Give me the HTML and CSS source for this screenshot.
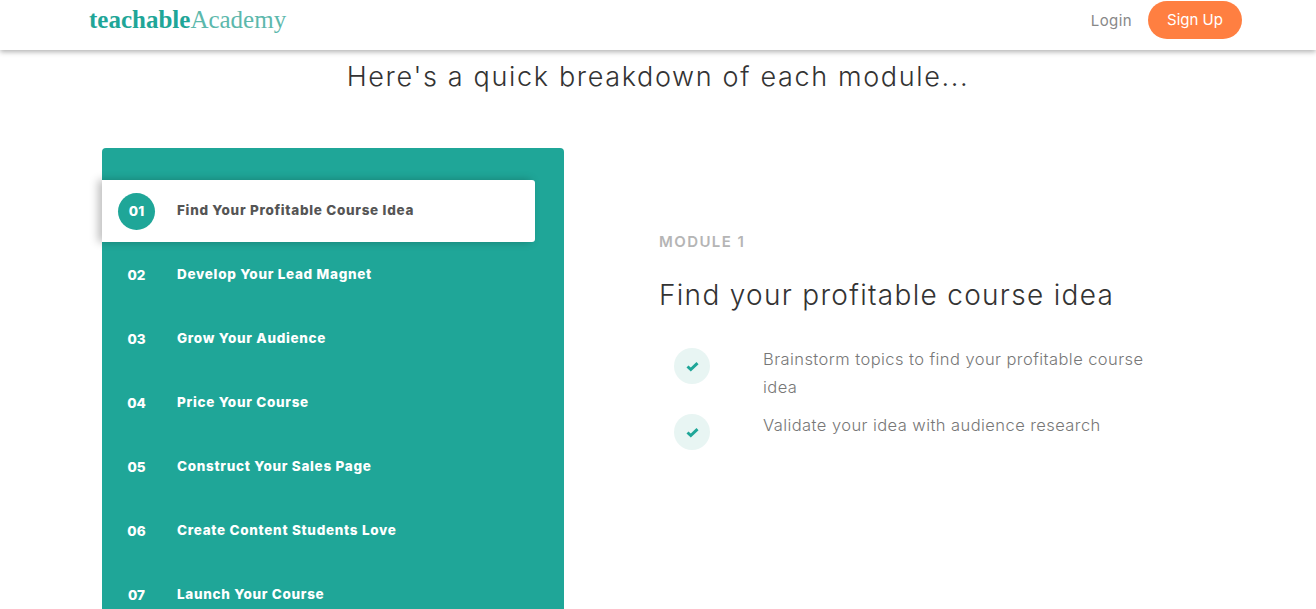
FILE: index.html
```html
<!DOCTYPE html>
<html lang="en">
<head>
    <meta charset="UTF-8">
    <title>Teachable Academy</title>
    <link rel="stylesheet" href="styles.css">
</head>
<body>
    <header class="topbar">
        <a class="logo"><span class="logo-bold">teachable</span><span class="logo-light">Academy</span></a>
        <nav class="topnav">
            <a class="login">Login</a>
            <a class="signup">Sign Up</a>
        </nav>
    </header>

    <main>
        <h2 class="page-title">Here's a quick breakdown of each module...</h2>

        <section class="modules">
            <ul class="module-list">
                <li class="module active"><span class="num">01</span><span class="name">Find Your Profitable Course Idea</span></li>
                <li class="module"><span class="num">02</span><span class="name">Develop Your Lead Magnet</span></li>
                <li class="module"><span class="num">03</span><span class="name">Grow Your Audience</span></li>
                <li class="module"><span class="num">04</span><span class="name">Price Your Course</span></li>
                <li class="module"><span class="num">05</span><span class="name">Construct Your Sales Page</span></li>
                <li class="module"><span class="num">06</span><span class="name">Create Content Students Love</span></li>
                <li class="module"><span class="num">07</span><span class="name">Launch Your Course</span></li>
            </ul>

            <div class="detail">
                <div class="eyebrow">MODULE 1</div>
                <h3 class="detail-title">Find your profitable course idea</h3>
                <ul class="points">
                    <li class="point">
                        <span class="check"><svg width="13" height="11" viewBox="0 0 13 11"><path d="M1.5 5.5 4.8 8.5 11.5 2.2" fill="none" stroke="#1fa698" stroke-width="3"/></svg></span>
                        <span class="point-text">Brainstorm topics to find your profitable course idea</span>
                    </li>
                    <li class="point">
                        <span class="check"><svg width="13" height="11" viewBox="0 0 13 11"><path d="M1.5 5.5 4.8 8.5 11.5 2.2" fill="none" stroke="#1fa698" stroke-width="3"/></svg></span>
                        <span class="point-text">Validate your idea with audience research</span>
                    </li>
                </ul>
            </div>
        </section>
    </main>
</body>
</html>
```
FILE: styles.css
```css
html, body {
    margin: 0;
    height: 609px;
    overflow: hidden;
}
body {
    font-family: "Inter", "Liberation Sans", sans-serif;
    background-color: #fff;
    color: #333;
}
ul {
    list-style-type: none;
    margin: 0;
    padding: 0;
}
.topbar {
    height: 50px;
    display: flex;
    align-items: center;
    justify-content: space-between;
    padding: 0 74px 0 89px;
    background-color: #fff;
    box-shadow: 0 2px 5px rgba(0, 0, 0, 0.3);
}
.logo {
    font-family: "Liberation Serif", serif;
    font-size: 25px;
    margin-top: -10px;
    color: #1fa698;
}
.logo-bold {
    font-weight: bold;
}
.logo-light {
    color: #5cb8ac;
}
.topnav {
    display: flex;
    align-items: center;
    gap: 16px;
    margin-top: -10px;
}
.login {
    font-size: 15px;
    letter-spacing: 0.4px;
    color: #888;
}
.signup {
    width: 94px;
    height: 38px;
    line-height: 38px;
    text-align: center;
    font-size: 15px;
    color: #fff;
    background-color: #ff7f41;
    border-radius: 19px;
}
.page-title {
    margin: 11px 0 0;
    height: 87px;
    text-align: center;
    font-size: 27px;
    line-height: 32px;
    font-weight: 300;
    letter-spacing: 1.65px;
    color: #333;
}
.modules {
    display: flex;
    height: 461px;
    overflow: hidden;
    padding-left: 102px;
}
.module-list {
    width: 462px;
    height: 520px;
    flex-shrink: 0;
    padding-top: 32px;
    box-sizing: border-box;
    background-color: #1fa698;
    border-radius: 4px 4px 0 0;
}
.module {
    width: 433px;
    height: 62px;
    margin-bottom: 2px;
    display: flex;
    align-items: center;
    color: #fff;
    font-size: 13.5px;
    font-weight: 800;
}
.module.active {
    background-color: #fff;
    color: #555;
    border-radius: 0 3px 3px 0;
    box-shadow: -4px 0 8px rgba(0, 0, 0, 0.25);
}
.num {
    width: 37px;
    height: 37px;
    margin-left: 16px;
    margin-right: 22px;
    border-radius: 50%;
    display: flex;
    align-items: center;
    justify-content: center;
    font-size: 13.5px;
    margin-top: -1px;
}
.module.active .num {
    background-color: #1fa698;
    color: #fff;
    margin-top: 0;
}
.name {
    letter-spacing: 0.7px;
    margin-top: -2px;
}
.detail {
    margin-left: 95px;
    padding-top: 85px;
    width: 500px;
}
.eyebrow {
    font-size: 15px;
    font-weight: 600;
    letter-spacing: 1.4px;
    line-height: 18px;
    color: #b5b5b5;
}
.detail-title {
    margin: 27px 0 31px;
    font-size: 28px;
    line-height: 34px;
    font-weight: 300;
    letter-spacing: 1.3px;
    color: #333;
}
.point {
    display: flex;
    margin-bottom: 8px;
}
.check {
    width: 36px;
    height: 36px;
    margin: 5px 53px 0 15px;
    flex-shrink: 0;
    border-radius: 50%;
    background-color: #e8f5f3;
    display: flex;
    align-items: center;
    justify-content: center;
}
.point-text {
    width: 390px;
    margin-top: 2px;
    font-size: 16.5px;
    font-weight: 300;
    line-height: 28px;
    letter-spacing: 0.43px;
    color: #777;
}
```
